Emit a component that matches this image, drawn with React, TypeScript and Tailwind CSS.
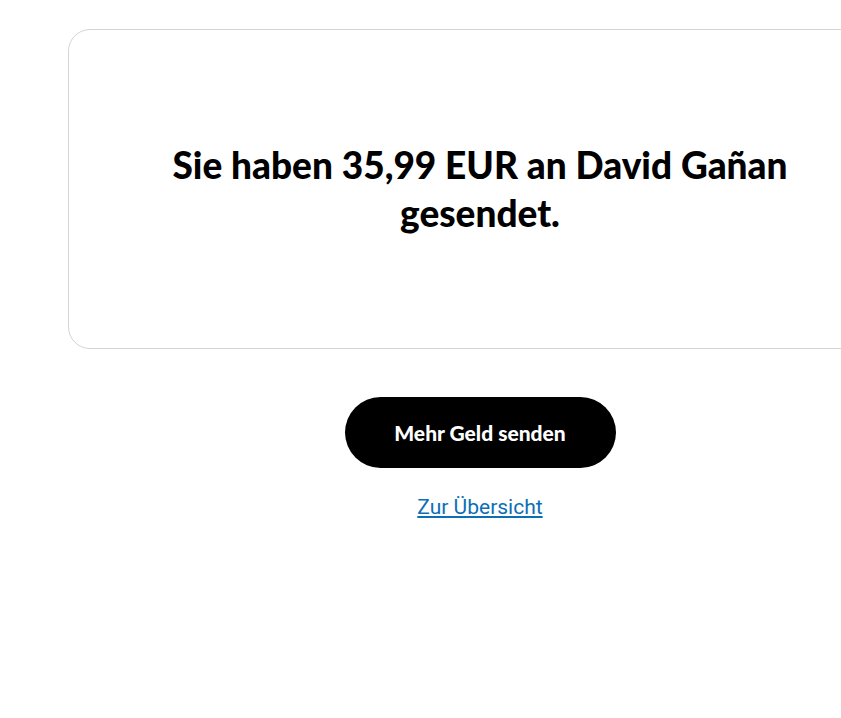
import React from 'react';

export default function App() {
  return (
    <div className="min-h-screen bg-white">
      <div className="w-[960px] px-[68px] pt-[29px]">
        <div className="flex h-[320px] items-center justify-center rounded-[22px] border border-[#d4d4d4] px-10">
          <h1 className="max-w-[660px] text-center font-['Lato',sans-serif] text-[37px] font-black leading-[48px] text-black">
            Sie haben 35,99 EUR an David Gañan gesendet.
          </h1>
        </div>
        <div className="mt-[48px] flex flex-col items-center">
          <button className="flex h-[71px] w-[271px] items-center justify-center rounded-full bg-black font-['Lato',sans-serif] text-[21px] font-black text-white">
            Mehr Geld senden
          </button>
          <a
            href="#"
            className="mt-[24px] font-['Roboto',sans-serif] text-[21px] text-[#0b6fb5] underline underline-offset-2"
          >
            Zur Übersicht
          </a>
        </div>
      </div>
    </div>
  );
}
